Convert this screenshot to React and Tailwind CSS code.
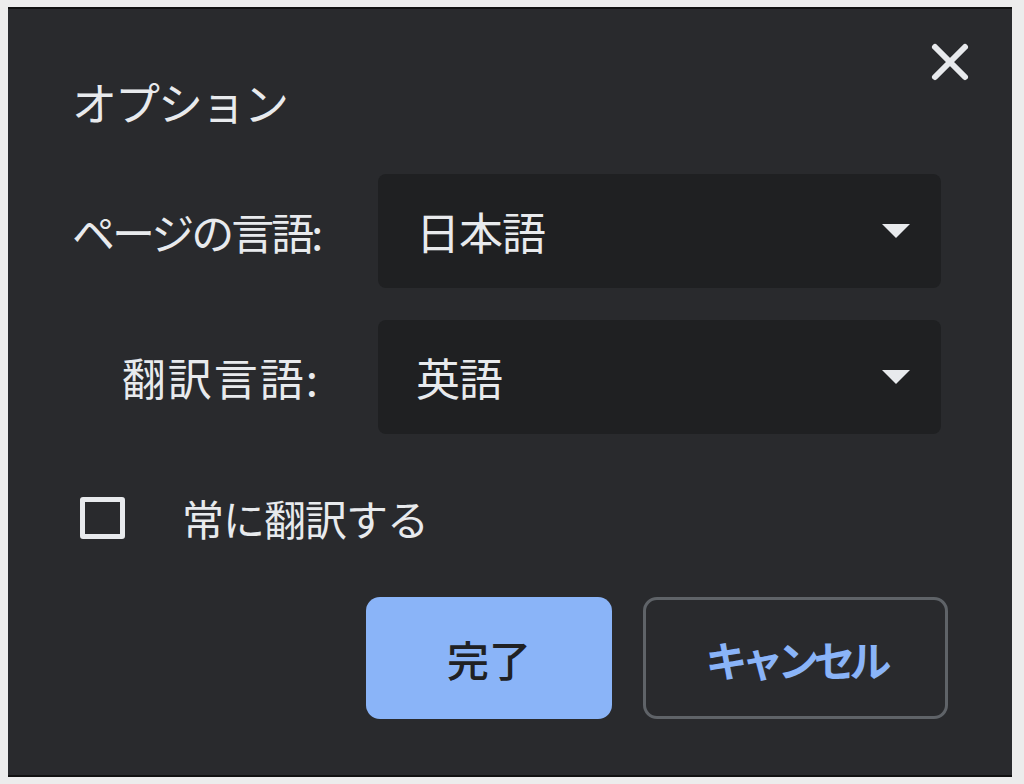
import React, { useState } from "react";

const font = { fontFamily: '"Noto Sans CJK JP", "Noto Sans", sans-serif' };

const Caret = () => (
  <svg width="32" height="18" viewBox="0 0 32 18" className="shrink-0">
    <path d="M2 2 L30 2 L16 16 Z" fill="#e8eaed" />
  </svg>
);

const SelectBox = ({ value }) => (
  <div className="h-[114px] w-[563px] rounded-[8px] bg-[#1f2022] flex items-center justify-between pl-[38px] pr-[29px]">
    <span className="text-[44px] leading-none text-[#e8eaed] tracking-[-1px]">{value}</span>
    <Caret />
  </div>
);

const App = () => {
  const [always, setAlways] = useState(false);

  return (
    <div
      className="w-[1024px] h-[784px] bg-[#ececec] pl-[8px] pt-[7px]"
      style={font}
    >
      <div className="w-[1004px] h-[770px] bg-[#292a2d] border-t-2 border-b-2 border-[#111]">
        {/* header */}
        <div className="flex items-start justify-between pl-[64px] pr-[42px] pt-[33px]">
          <h1 className="mt-[34px] h-[52px] leading-[52px] text-[45px] font-normal text-[#e8eaed] tracking-[-2px]">
            オプション
          </h1>
          <button type="button" className="w-[40px] h-[40px] flex items-center justify-center">
            <svg width="40" height="40" viewBox="0 0 40 40">
              <path
                d="M5 5 L35 35 M35 5 L5 35"
                stroke="#e8eaed"
                strokeWidth="6"
                strokeLinecap="round"
              />
            </svg>
          </button>
        </div>

        {/* language rows */}
        <div className="mt-[46px] pl-[64px] grid grid-cols-[248px_563px] gap-x-[58px] gap-y-[32px] items-center">
          <span className="text-right text-[43px] leading-none text-[#e8eaed] tracking-[-3px] whitespace-nowrap">
            ページの言語:
          </span>
          <SelectBox value="日本語" />
          <span className="text-right text-[44px] leading-none text-[#e8eaed] tracking-[2px] whitespace-nowrap">
            翻訳言語:
          </span>
          <SelectBox value="英語" />
        </div>

        {/* checkbox */}
        <div className="mt-[63px] pl-[72px] flex items-center gap-[57px]">
          <button
            type="button"
            onClick={() => setAlways(!always)}
            className="w-[45px] h-[42px] border-[5px] border-[#e8eaed] rounded-[3px]"
          />
          <span className="text-[42px] leading-none text-[#e8eaed] tracking-[-1px]">
            常に翻訳する
          </span>
        </div>

        {/* buttons */}
        <div className="mt-[58px] pr-[64px] flex justify-end gap-[31px]">
          <button
            type="button"
            className="w-[246px] h-[122px] rounded-[14px] bg-[#8ab4f8] text-[42px] font-medium text-[#202124]"
          >
            完了
          </button>
          <button
            type="button"
            className="w-[305px] h-[122px] rounded-[14px] border-[3px] border-[#5f6368] text-[42px] font-bold text-[#8ab4f8] tracking-[-6px]"
          >
            キャンセル
          </button>
        </div>
      </div>
    </div>
  );
};

export default App;
